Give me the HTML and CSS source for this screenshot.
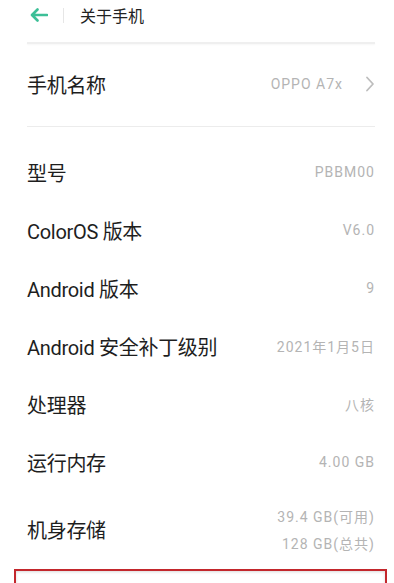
FILE: index.html
```html
<!DOCTYPE html>
<html lang="zh-CN">
<head>
    <meta charset="UTF-8">
    <meta name="viewport" content="width=device-width, initial-scale=1.0">
    <title>关于手机</title>
<link rel="stylesheet" href="styles.css">
</head>
<body>
    <div class="topbar">
        <svg class="back" width="18" height="14" viewBox="0 0 18 14">
            <path d="M17 7H2.5M7.5 1.5L2 7l5.5 5.5" fill="none" stroke="#3dbf97" stroke-width="2.6" stroke-linecap="round" stroke-linejoin="round"/>
        </svg>
        <span class="bar-divider"></span>
        <span class="title">关于手机</span>
    </div>
    <div class="topbar-line"></div>

    <div class="page">
        <div class="row row-name">
            <span class="label">手机名称</span>
            <span class="value">OPPO&nbsp;A7x
                <svg class="chevron" width="10" height="16" viewBox="0 0 10 16">
                    <path d="M2 1.5L8 8l-6 6.5" fill="none" stroke="#bdbdbd" stroke-width="1.8" stroke-linecap="round" stroke-linejoin="round"/>
                </svg>
            </span>
        </div>
        <div class="separator"></div>

        <div class="row">
            <span class="label">型号</span>
            <span class="value">PBBM00</span>
        </div>
        <div class="row">
            <span class="label">ColorOS 版本</span>
            <span class="value">V6.0</span>
        </div>
        <div class="row">
            <span class="label">Android 版本</span>
            <span class="value">9</span>
        </div>
        <div class="row">
            <span class="label">Android 安全补丁级别</span>
            <span class="value">2021年1月5日</span>
        </div>
        <div class="row">
            <span class="label">处理器</span>
            <span class="value">八核</span>
        </div>
        <div class="row">
            <span class="label">运行内存</span>
            <span class="value">4.00 GB</span>
        </div>
        <div class="row row-storage">
            <span class="label">机身存储</span>
            <span class="value value-stack">
                <span>39.4 GB(可用)</span>
                <span>128 GB(总共)</span>
            </span>
        </div>
    </div>

    <div class="highlight"></div>
</body>
</html>
```

FILE: styles.css
```css
body {
    margin: 0;
    background-color: #fff;
    font-family: Roboto, "Noto Sans CJK SC", sans-serif;
    color: #1e1e1e;
    overflow: hidden;
}

.topbar {
    height: 30px;
    display: flex;
    align-items: center;
    padding-left: 30px;
}

.back {
    display: block;
}

.bar-divider {
    width: 1px;
    height: 15px;
    background-color: #e6e6e6;
    margin-left: 15px;
    margin-right: 16px;
}

.title {
    font-size: 16px;
    color: #222;
}

.topbar-line {
    margin: 12px 19px 0 27px;
    height: 2px;
    background-color: #efefef;
    box-shadow: 0 1px 2px rgba(0, 0, 0, 0.04);
}

.page {
    padding: 0 19px 0 27px;
}

.row {
    height: 58px;
    display: flex;
    align-items: center;
    justify-content: space-between;
}

.row-name {
    height: 80px;
    padding-bottom: 2px;
}

.separator {
    height: 1px;
    background-color: #ececec;
    margin-bottom: 16px;
}

.label {
    font-size: 20px;
    letter-spacing: -0.3px;
    color: #1e1e1e;
}

.value {
    font-size: 14px;
    letter-spacing: 1px;
    color: #b4b4b4;
    display: flex;
    align-items: center;
}

.chevron {
    margin-left: 22px;
}

.row-storage {
    height: 76px;
}

.value-stack {
    flex-direction: column;
    align-items: flex-end;
    line-height: 27px;
    padding-top: 4px;
}

.highlight {
    margin: 2px 7px 0 14px;
    height: 40px;
    border: 2px solid #c3272c;
    box-shadow: inset 0 1px 3px rgba(0, 0, 0, 0.15);
}
```
